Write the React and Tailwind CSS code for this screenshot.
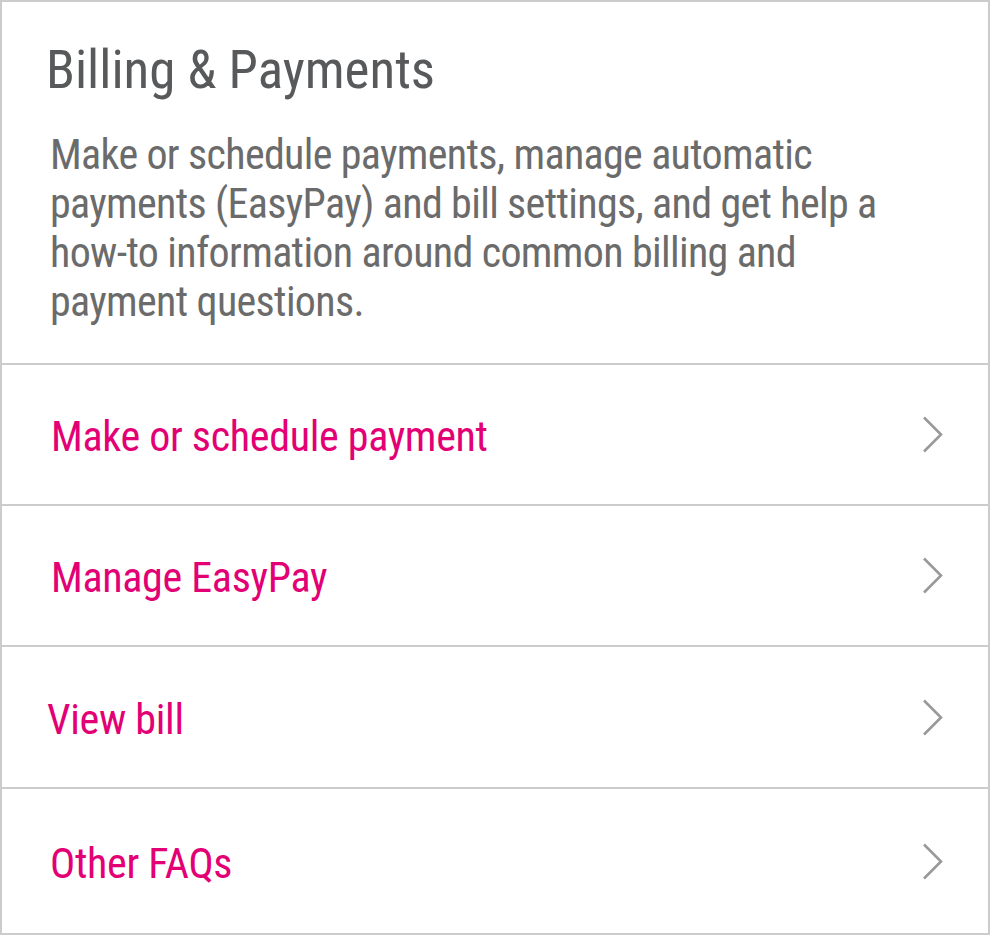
import React from "react";

const font = { fontFamily: '"Roboto Condensed", Roboto, "Liberation Sans", sans-serif' };

function Chevron() {
  return (
    <svg width="22" height="37" viewBox="0 0 22 37" fill="none" className="shrink-0">
      <polyline points="2,1.5 19,18.5 2,35.5" stroke="#999999" strokeWidth="2.6" fill="none" />
    </svg>
  );
}

function Row({ label, h, pl }) {
  return (
    <div className={`flex items-center justify-between border-t-2 border-[#cccccc] pr-[44px] ${pl} ${h}`}>
      <span className="pt-[4px] text-[42px] leading-[49px] tracking-[-0.3px] text-[#e20074]">{label}</span>
      <Chevron />
    </div>
  );
}

export default function App() {
  return (
    <div className="w-[990px] h-[935px] bg-white" style={font}>
      <div className="flex h-full flex-col border-2 border-[#cccccc] bg-white">
        <div className="h-[361px] pl-[44px] pt-[37px]">
          <h1 className="text-[53px] leading-[62px] font-normal text-[#58595b]">Billing &amp; Payments</h1>
          <p className="mt-[29px] pl-[4px] text-[42px] leading-[49px] tracking-[-0.65px] text-[#6b6b6b]">
            Make or schedule payments, manage automatic
            <br />
            payments (EasyPay) and bill settings, and get help a
            <br />
            how-to information around common billing and
            <br />
            payment questions.
          </p>
        </div>
        <Row label="Make or schedule payment" h="h-[141px]" pl="pl-[49px]" />
        <Row label="Manage EasyPay" h="h-[141px]" pl="pl-[49px]" />
        <Row label="View bill" h="h-[142px]" pl="pl-[45px]" />
        <div className="flex flex-1 items-center justify-between border-t-2 border-[#cccccc] pl-[48px] pr-[44px]">
          <span className="pt-[4px] text-[42px] leading-[49px] tracking-[-0.3px] text-[#e20074]">Other FAQs</span>
          <Chevron />
        </div>
      </div>
    </div>
  );
}
